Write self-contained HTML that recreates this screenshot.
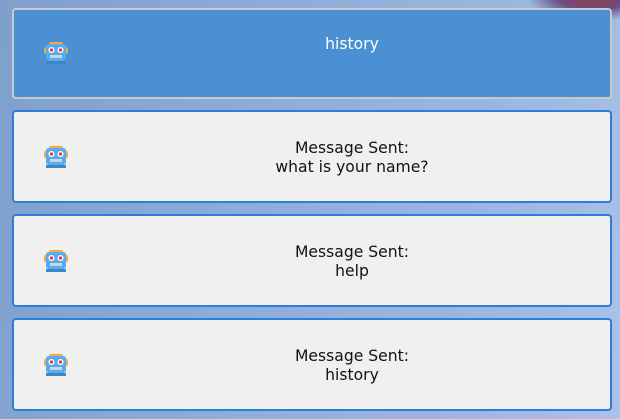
<!DOCTYPE html>
<html><head><style>
html,body{margin:0;padding:0;}
body{width:620px;height:419px;overflow:hidden;position:relative;font-family:"DejaVu Sans","Liberation Sans",sans-serif;
background:linear-gradient(100deg,#7f9fcc 0%,#8eacd8 40%,#9db8e2 80%,#a9c2e8 100%);}
.blob{position:absolute;right:0;top:-20px;width:90px;height:40px;background:radial-gradient(ellipse at 70% 40%,#9a3a3a 0%,#6a4d80 40%,rgba(150,170,220,0) 75%);}
.card{position:absolute;left:12px;width:600px;border-radius:4px;box-sizing:border-box;}
.c0{top:8px;height:91px;background:#4a90d2;border:2px solid #c9c9c9;color:#fff;}
.c{height:93px;background:#f0f0f0;border:2px solid #2b7fd8;color:#111;}
.txt{position:absolute;left:80px;right:0;text-align:center;font-size:15.6px;line-height:19px;}
.ic{position:absolute;left:29px;}
</style></head><body>
<div class="blob"></div>
<div class="card c0"><svg class="ic" style="top:30px" width="26" height="26" viewBox="0 0 26 26"><use href="#rb"/></svg><div class="txt" style="top:25px">history</div></div>
<div class="card c" style="top:110px"><svg class="ic" style="top:32px" width="26" height="26"><use href="#rb"/></svg><div class="txt" style="top:27px">Message Sent:<br>what is your name?</div></div>
<div class="card c" style="top:214px"><svg class="ic" style="top:32px" width="26" height="26"><use href="#rb"/></svg><div class="txt" style="top:27px">Message Sent:<br>help</div></div>
<div class="card c" style="top:318px"><svg class="ic" style="top:32px" width="26" height="26"><use href="#rb"/></svg><div class="txt" style="top:27px">Message Sent:<br>history</div></div>
<svg width="0" height="0" style="position:absolute"><defs><g id="rb">
<rect x="6" y="2" width="14" height="3" rx="1.5" fill="#f2a93b"/>
<rect x="1" y="7" width="4" height="7" rx="2" fill="#f2a93b"/>
<rect x="21" y="7" width="4" height="7" rx="2" fill="#f2a93b"/>
<rect x="3" y="4" width="20" height="17" rx="3" fill="#55acee"/>
<circle cx="8.5" cy="10" r="3" fill="#fff"/><circle cx="17.5" cy="10" r="3" fill="#fff"/>
<circle cx="8.5" cy="10" r="1.6" fill="#dd2e44"/><circle cx="17.5" cy="10" r="1.6" fill="#dd2e44"/>
<rect x="7" y="15" width="12" height="3" fill="#ccd6dd"/>
<rect x="3" y="21" width="20" height="3" fill="#3b88c3"/>
</g></defs></svg>
</body></html>
